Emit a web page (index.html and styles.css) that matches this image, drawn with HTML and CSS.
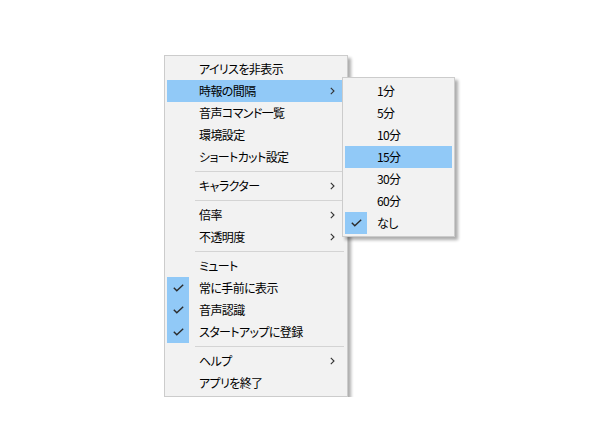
FILE: index.html
```html
<!DOCTYPE html>
<html lang="ja">
<head>
    <meta charset="UTF-8">
    <title>メニュー</title>
    <link rel="stylesheet" href="styles.css">
</head>
<body>
    <div class="menu main-menu">
        <div class="item"><span class="check"></span><span class="label">アイリスを非表示</span></div>
        <div class="item active">
            <span class="check"></span><span class="label">時報の間隔</span>
            <svg class="arrow" width="5" height="8" viewBox="0 0 5 8"><polyline points="0.8,0.8 4,4 0.8,7.2"/></svg>
        </div>
        <div class="item"><span class="check"></span><span class="label">音声コマンド一覧</span></div>
        <div class="item"><span class="check"></span><span class="label">環境設定</span></div>
        <div class="item"><span class="check"></span><span class="label">ショートカット設定</span></div>
        <div class="sep"></div>
        <div class="item">
            <span class="check"></span><span class="label">キャラクター</span>
            <svg class="arrow" width="5" height="8" viewBox="0 0 5 8"><polyline points="0.8,0.8 4,4 0.8,7.2"/></svg>
        </div>
        <div class="sep"></div>
        <div class="item">
            <span class="check"></span><span class="label">倍率</span>
            <svg class="arrow" width="5" height="8" viewBox="0 0 5 8"><polyline points="0.8,0.8 4,4 0.8,7.2"/></svg>
        </div>
        <div class="item">
            <span class="check"></span><span class="label">不透明度</span>
            <svg class="arrow" width="5" height="8" viewBox="0 0 5 8"><polyline points="0.8,0.8 4,4 0.8,7.2"/></svg>
        </div>
        <div class="sep"></div>
        <div class="item"><span class="check"></span><span class="label">ミュート</span></div>
        <div class="item checked">
            <span class="check"><svg width="11" height="8" viewBox="0 0 11 8"><polyline points="0.8,3.8 3.8,6.8 10.2,0.8"/></svg></span>
            <span class="label">常に手前に表示</span>
        </div>
        <div class="item checked">
            <span class="check"><svg width="11" height="8" viewBox="0 0 11 8"><polyline points="0.8,3.8 3.8,6.8 10.2,0.8"/></svg></span>
            <span class="label">音声認識</span>
        </div>
        <div class="item checked">
            <span class="check"><svg width="11" height="8" viewBox="0 0 11 8"><polyline points="0.8,3.8 3.8,6.8 10.2,0.8"/></svg></span>
            <span class="label">スタートアップに登録</span>
        </div>
        <div class="sep"></div>
        <div class="item">
            <span class="check"></span><span class="label">ヘルプ</span>
            <svg class="arrow" width="5" height="8" viewBox="0 0 5 8"><polyline points="0.8,0.8 4,4 0.8,7.2"/></svg>
        </div>
        <div class="item"><span class="check"></span><span class="label">アプリを終了</span></div>

        <!-- 時報の間隔 submenu -->
        <div class="menu sub-menu">
            <div class="item"><span class="check"></span><span class="label">1分</span></div>
            <div class="item"><span class="check"></span><span class="label">5分</span></div>
            <div class="item"><span class="check"></span><span class="label">10分</span></div>
            <div class="item active"><span class="check"></span><span class="label">15分</span></div>
            <div class="item"><span class="check"></span><span class="label">30分</span></div>
            <div class="item"><span class="check"></span><span class="label">60分</span></div>
            <div class="item checked">
                <span class="check"><svg width="11" height="8" viewBox="0 0 11 8"><polyline points="0.8,3.8 3.8,6.8 10.2,0.8"/></svg></span>
                <span class="label">なし</span>
            </div>
        </div>
    </div>
</body>
</html>
```

FILE: styles.css
```css
body {
    margin: 0;
    background: #ffffff;
    font-family: "Noto Sans CJK JP", "Noto Sans", sans-serif;
    font-size: 12px;
    font-feature-settings: "palt";
    letter-spacing: -0.6px;
    color: #000;
}
.menu {
    box-sizing: border-box;
    background: #f2f2f2;
    border: 1px solid #cccccc;
    padding: 2px;
    box-shadow: 3px 3px 3px rgba(0, 0, 0, 0.32);
}
.main-menu {
    position: relative;
    width: 184px;
    margin: 55px 0 0 164px;
}
.sub-menu {
    position: absolute;
    top: 21px;
    left: 177px;
    width: 113px;
}
.item {
    display: flex;
    align-items: center;
    height: 22px;
    line-height: 22px;
}
.item.active {
    background: #91c9f7;
}
.check {
    flex: none;
    width: 22px;
    height: 22px;
    display: flex;
    align-items: center;
    justify-content: center;
}
.checked .check {
    background: #91c9f7;
}
.check svg {
    fill: none;
    stroke: #2b2b2b;
    stroke-width: 1.4;
}
.label {
    flex: 1;
    margin-left: 10px;
    white-space: nowrap;
}
.arrow {
    flex: none;
    margin-right: 10px;
    fill: none;
    stroke: #333;
    stroke-width: 1.1;
}
.sep {
    height: 1px;
    margin: 3px 1px 3px 28px;
    background: #d4d4d4;
}
```
